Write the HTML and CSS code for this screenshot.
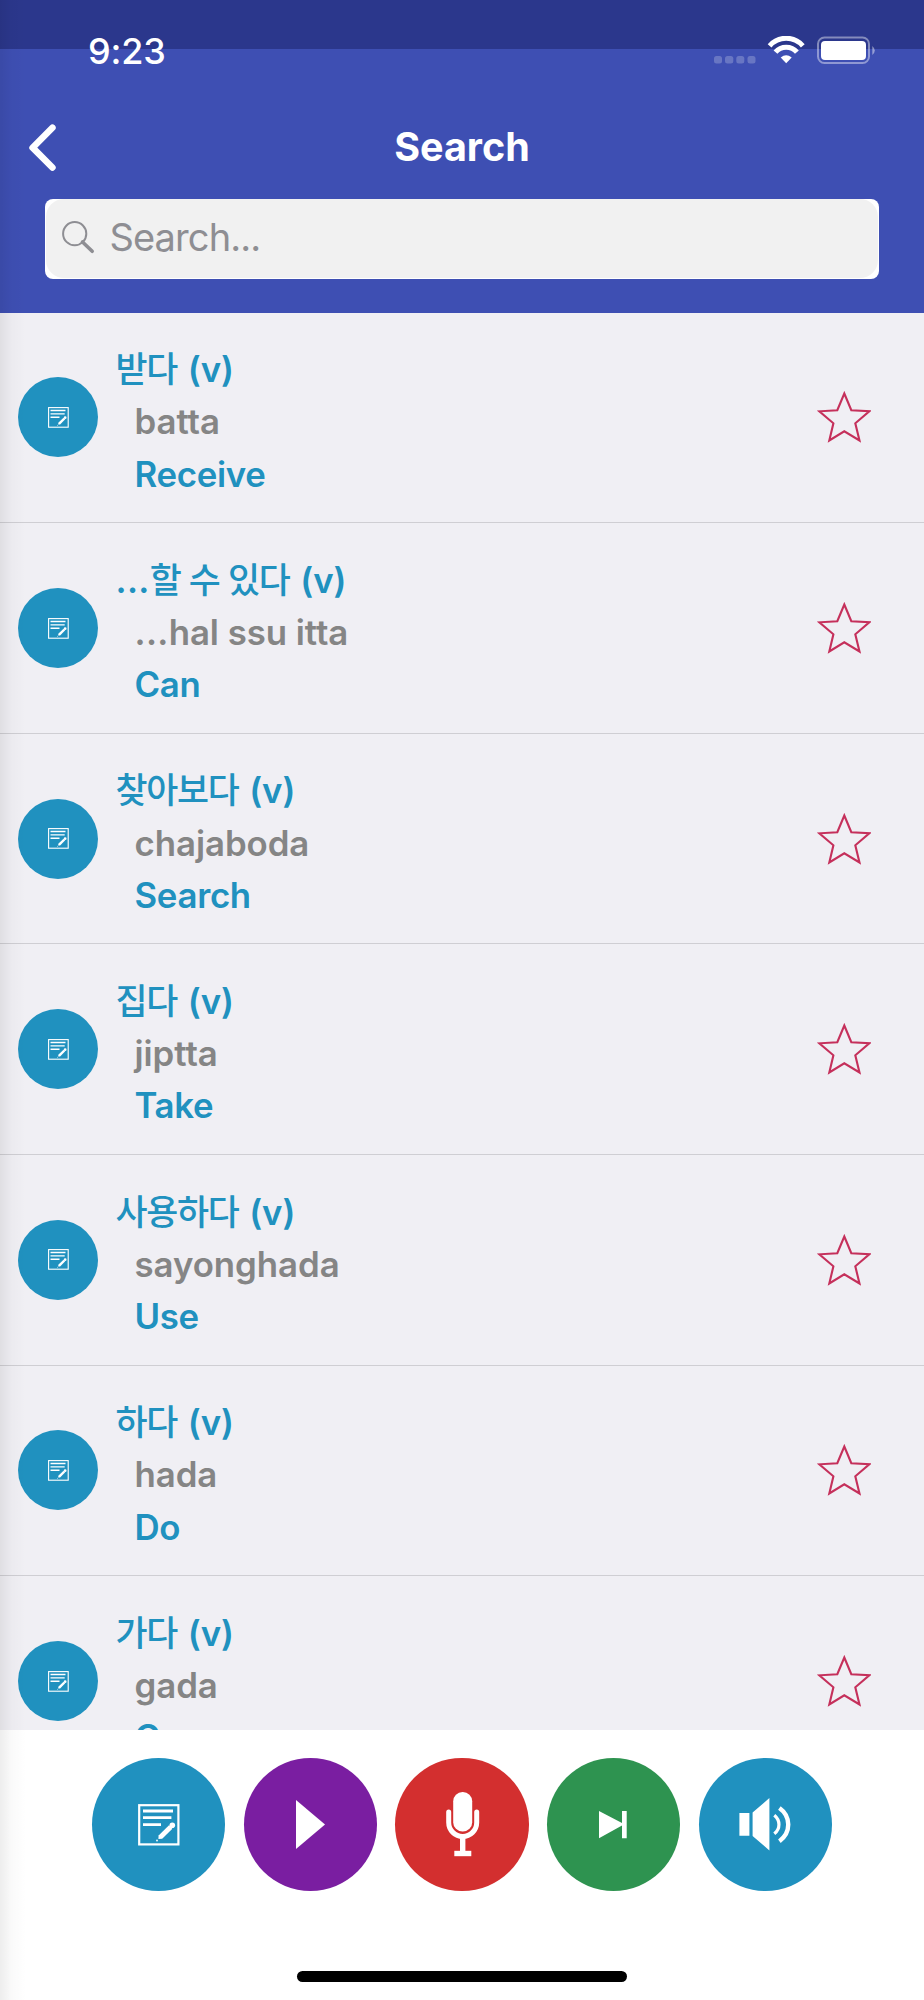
FILE: index.html
```html
<!DOCTYPE html>
<html lang="en">
<head>
<meta charset="utf-8">
<title>Search</title>
<link rel="stylesheet" href="styles.css">
</head>
<body>
<svg width="0" height="0" class="defs">
  <symbol id="note" viewBox="0 0 42 42">
    <rect x="1.2" y="1.2" width="39.2" height="39.2" fill="none" stroke="#fff" stroke-width="2.2"/>
    <path d="M5 7h30M5 13.7h28.4M5 20.6h18" stroke="#fff" stroke-width="2.8" fill="none"/>
    <path d="M20.6 31.4L31 21.3l3.4 3.4L24.2 34.8l-3.8.3z" fill="#fff"/>
    <circle cx="34.3" cy="21.3" r="2.8" fill="#fff"/>
    <circle cx="19" cy="36.5" r=".9" fill="#fff"/>
  </symbol>
  <symbol id="star" viewBox="0 0 54 52">
    <path d="M27.3 2.5L34.3 19.2L52.3 20.3L38.3 32.3L42.5 49.5L27.3 40.3L12.3 49.5L16.4 32.3L2.3 20.3L20.3 19.2Z" fill="none" stroke="#c5305b" stroke-width="2.1"/>
  </symbol>
</svg>
<div class="screen">
  <header class="header">
    <div class="status">
      <span class="time">9:23</span>
      <svg class="indicators" width="164" height="30" viewBox="0 0 164 30">
        <g fill="#fff" opacity=".22"><rect x="1" y="20" width="8" height="7.5" rx="2.5"/><rect x="12" y="20" width="8.3" height="7.5" rx="2.5"/><rect x="23.3" y="20" width="8" height="7.5" rx="2.5"/><rect x="34.5" y="20" width="8" height="7.5" rx="2.5"/></g>
        <g fill="none" stroke="#fff"><path d="M56.6 9.8a22 22 0 0 1 33.2 0" stroke-width="5"/><path d="M62.5 16.2a14 14 0 0 1 21.4 0" stroke-width="5"/></g>
        <path d="M67.7 21.4q5.5-4.2 11 0l-5.5 5.8z" fill="#fff"/>
        <rect x="105" y="1.5" width="51" height="25.5" rx="6.5" fill="none" stroke="#fff" stroke-opacity=".42" stroke-width="2"/>
        <rect x="108" y="5" width="45" height="19" rx="4" fill="#fff"/>
        <path d="M159.3 10q5 4.5 0 9z" fill="#fff" opacity=".45"/>
      </svg>
    </div>
    <div class="navbar">
      <svg class="back" width="30" height="50" viewBox="0 0 30 50"><path d="M24.4 4.7L4.6 24.7l19.8 19.8" fill="none" stroke="#fff" stroke-width="6.6" stroke-linecap="round" stroke-linejoin="round"/></svg>
      <h1 class="title">Search</h1>
    </div>
    <div class="search"><div class="field">
      <svg width="34" height="34" viewBox="0 0 34 34"><circle cx="13.7" cy="13.7" r="11.6" fill="none" stroke="#8e8e93" stroke-width="2"/><path d="M21.5 22l9.7 9.3" stroke="#8e8e93" stroke-width="3.6" stroke-linecap="round"/></svg>
      <span class="placeholder">Search...</span>
    </div></div>
  </header>
  <main class="list">
    <div class="row"><span class="badge"><svg><use href="#note"/></svg></span><div class="words"><p class="word"><span class="ko" lang="ko">받다</span> (v)</p><p class="roman">batta</p><p class="meaning">Receive</p></div><svg class="star"><use href="#star"/></svg></div>
    <div class="row"><span class="badge"><svg><use href="#note"/></svg></span><div class="words"><p class="word"><span class="dots">...</span><span class="ko" lang="ko">할 수 있다</span> (v)</p><p class="roman"><span class="dots">...</span>hal ssu itta</p><p class="meaning">Can</p></div><svg class="star"><use href="#star"/></svg></div>
    <div class="row"><span class="badge"><svg><use href="#note"/></svg></span><div class="words"><p class="word"><span class="ko" lang="ko">찾아보다</span> (v)</p><p class="roman">chajaboda</p><p class="meaning">Search</p></div><svg class="star"><use href="#star"/></svg></div>
    <div class="row"><span class="badge"><svg><use href="#note"/></svg></span><div class="words"><p class="word"><span class="ko" lang="ko">집다</span> (v)</p><p class="roman">jiptta</p><p class="meaning">Take</p></div><svg class="star"><use href="#star"/></svg></div>
    <div class="row"><span class="badge"><svg><use href="#note"/></svg></span><div class="words"><p class="word"><span class="ko" lang="ko">사용하다</span> (v)</p><p class="roman">sayonghada</p><p class="meaning">Use</p></div><svg class="star"><use href="#star"/></svg></div>
    <div class="row"><span class="badge"><svg><use href="#note"/></svg></span><div class="words"><p class="word"><span class="ko" lang="ko">하다</span> (v)</p><p class="roman">hada</p><p class="meaning">Do</p></div><svg class="star"><use href="#star"/></svg></div>
    <div class="row"><span class="badge"><svg><use href="#note"/></svg></span><div class="words"><p class="word"><span class="ko" lang="ko">가다</span> (v)</p><p class="roman">gada</p><p class="meaning">Go</p></div><svg class="star"><use href="#star"/></svg></div>
  </main>
  <footer class="footer">
    <div class="actions">
      <span class="action blue"><svg width="42" height="42"><use href="#note"/></svg></span>
      <span class="action purple"><svg width="133" height="133" viewBox="0 0 133 133"><path d="M52 42v49L81 66.5z" fill="#fff"/></svg></span>
      <span class="action red"><svg width="133" height="133" viewBox="0 0 133 133"><rect x="57.2" y="34" width="19" height="39.5" rx="9.3" fill="#fff"/><path d="M52.7 54v10.5a14 14 0 0 0 28 0V54" fill="none" stroke="#fff" stroke-width="5" stroke-linecap="round"/><path d="M66.7 79v18" stroke="#fff" stroke-width="5.4"/><path d="M58.3 95.5h17" stroke="#fff" stroke-width="5.4"/></svg></span>
      <span class="action green"><svg width="133" height="133" viewBox="0 0 133 133"><path d="M52 53l23 12v-12h4.7v27.3H75V67.5L52 80.3z" fill="#fff"/></svg></span>
      <span class="action blue"><svg width="133" height="133" viewBox="0 0 133 133"><path d="M40.4 55h10v22.7h-10zM53.6 54.5L70.4 40v52.5L53.6 78z" fill="#fff"/><path d="M75.3 57.2c6.2 5 6.2 13.6 0 18.6" fill="none" stroke="#fff" stroke-width="3.2"/><path d="M80.4 50c11.8 8.5 11.8 24.6 0 33.2" fill="none" stroke="#fff" stroke-width="4.4"/></svg></span>
    </div>
    <div class="home"></div>
  </footer>
  <div class="edge"></div>
</div>
</body>
</html>
```
FILE: styles.css
```css
* { box-sizing: border-box; }
body, p, h1 { margin: 0; }
body { font-family: Inter, "Noto Sans CJK KR", sans-serif; background: #fff; }
.defs { position: absolute; }
.screen {
  position: relative;
  width: 924px;
  height: 2000px;
  display: flex;
  flex-direction: column;
  overflow: hidden;
}
.header {
  height: 312.7px;
  flex: none;
  background: linear-gradient(#2b378c 49px, #3e4fb3 49px);
}
.status {
  height: 100px;
  display: flex;
  justify-content: space-between;
  padding: 27px 47px 0 88px;
}
.time {
  color: #fff;
  font-size: 36px;
  font-weight: 550;
  line-height: 48px;
  letter-spacing: -0.2px;
}
.indicators { margin-top: 9px; }
.navbar {
  height: 98.7px;
  display: grid;
  grid-template-columns: 100px 1fr 100px;
  align-items: center;
}
.back { margin: 0 0 3px 28px; }
.title {
  padding-bottom: 5px;
  color: #fff;
  font-size: 39.5px;
  font-weight: 650;
  line-height: 50px;
  text-align: center;
  letter-spacing: 0;
}
.search {
  width: 834px;
  height: 80.3px;
  margin-left: 45px;
  padding: 0.5px 1px;
  border-radius: 8px;
  background: #fff;
}
.field {
  height: 79.3px;
  display: flex;
  align-items: center;
  gap: 14.5px;
  padding: 0 0 3px 15px;
  border-radius: 18px;
  background: #f1f1f1;
}
.placeholder {
  color: #8e8e93;
  font-size: 38px;
  line-height: 50px;
  letter-spacing: -0.9px;
}
.list {
  flex: none;
  height: 1417.3px;
  overflow: hidden;
  background: #f0eff4;
}
.row {
  height: 210.6px;
  display: flex;
  align-items: center;
  padding: 0 53px 0 18px;
  border-bottom: 1.3px solid #cfced3;
}
.badge {
  width: 80px;
  height: 80px;
  border-radius: 50%;
  display: grid;
  place-items: center;
  background: #2091bf;
}
.badge svg { width: 21px; height: 21px; }
.words {
  flex: 1;
  padding: 8px 0 0 18.5px;
  font-size: 34.8px;
  font-weight: 600;
  line-height: 52.2px;
  color: #2091bf;
}
.word, .roman, .meaning { height: 52.2px; white-space: nowrap; }
.word { margin-left: -1px; }
.roman {
  color: #858585;
  padding-left: 18px;
  font-feature-settings: "calt" 0, "liga" 0, "dlig" 0;
  letter-spacing: -0.05px;
}
.meaning { padding-left: 18px; letter-spacing: -0.3px; }
.ko {
  margin-right: 2px;
  font-family: "Noto Sans CJK KR", sans-serif;
  font-weight: 500;
  line-height: 1;
  letter-spacing: -1.3px;
}
.dots { letter-spacing: 0.3px; }
.star { width: 54px; height: 52px; }
.footer {
  flex: 1;
  display: flex;
  flex-direction: column;
  justify-content: space-between;
  align-items: center;
  padding: 28.3px 0 18px;
  background: #fff;
}
.actions { display: flex; gap: 18.5px; }
.action {
  width: 133.2px;
  height: 133.2px;
  border-radius: 50%;
  display: grid;
  place-items: center;
}
.blue { background: #2091bf; }
.purple { background: #7a1ea1; }
.red { background: #d32f2f; }
.green { background: #2e9350; }
.home { width: 330px; height: 11px; border-radius: 6px; background: #000; }
.edge {
  position: absolute;
  left: 0;
  top: 0;
  width: 26px;
  height: 100%;
  background: linear-gradient(90deg, rgba(0,0,0,.07), rgba(0,0,0,.02) 45%, transparent);
}
```
